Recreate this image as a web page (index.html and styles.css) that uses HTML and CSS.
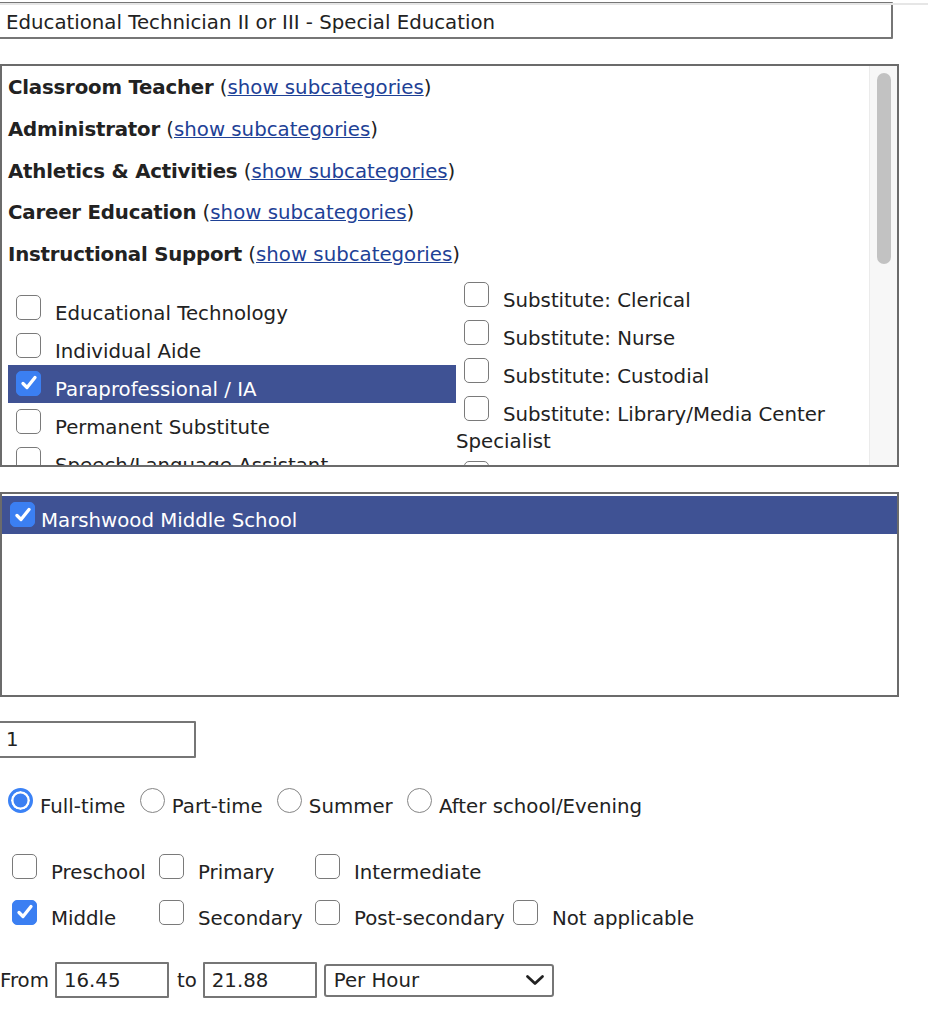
FILE: index.html
```html
<!DOCTYPE html>
<html>
<head>
<meta charset="utf-8">
<title>Job posting</title>
<link rel="stylesheet" href="styles.css">
</head>
<body>
<div class="topshade"></div>
<form class="form">
  <input class="field title" type="text" value="Educational Technician II or III - Special Education">

  <div class="cats">
    <div class="cats-body">
      <div class="cat"><b>Classroom Teacher</b> (<a href="#">show subcategories</a>)</div>
      <div class="cat"><b>Administrator</b> (<a href="#">show subcategories</a>)</div>
      <div class="cat"><b>Athletics &amp; Activities</b> (<a href="#">show subcategories</a>)</div>
      <div class="cat"><b>Career Education</b> (<a href="#">show subcategories</a>)</div>
      <div class="cat"><b>Instructional Support</b> (<a href="#">show subcategories</a>)</div>
      <div class="subcats">
        <div class="subcol left">
          <label class="opt"><span class="cb"></span>Educational Technology</label>
          <label class="opt"><span class="cb"></span>Individual Aide</label>
          <label class="opt sel"><span class="cb on"><svg viewBox="0 0 22 22" width="22" height="22"><path d="M5 11.5 L9 15.5 L17 5.5" fill="none" stroke="#fff" stroke-width="3.3" stroke-linecap="round" stroke-linejoin="round"/></svg></span>Paraprofessional / IA</label>
          <label class="opt"><span class="cb"></span>Permanent Substitute</label>
          <label class="opt"><span class="cb"></span>Speech/Language Assistant</label>
        </div>
        <div class="subcol right">
          <label class="opt"><span class="cb"></span>Substitute: Clerical</label>
          <label class="opt"><span class="cb"></span>Substitute: Nurse</label>
          <label class="opt"><span class="cb"></span>Substitute: Custodial</label>
          <label class="opt"><span class="cb"></span>Substitute: Library/Media Center Specialist</label>
          <label class="opt"><span class="cb"></span>Substitute: Teacher</label>
        </div>
      </div>
    </div>
    <div class="scroll"><div class="thumb"></div></div>
  </div>

  <div class="schools">
    <label class="school"><span class="cb on"><svg viewBox="0 0 22 22" width="22" height="22"><path d="M5 11.5 L9 15.5 L17 5.5" fill="none" stroke="#fff" stroke-width="3.3" stroke-linecap="round" stroke-linejoin="round"/></svg></span>Marshwood Middle School</label>
  </div>

  <input class="field num" type="text" value="1">

  <div class="radios">
    <label class="radio"><span class="rb on"></span>Full-time</label>
    <label class="radio"><span class="rb"></span>Part-time</label>
    <label class="radio"><span class="rb"></span>Summer</label>
    <label class="radio"><span class="rb"></span>After school/Evening</label>
  </div>

  <div class="levels">
    <label class="lvl"><span class="cb"></span>Preschool</label>
    <label class="lvl"><span class="cb"></span>Primary</label>
    <label class="lvl"><span class="cb"></span>Intermediate</label>
    <span class="lvl"></span>
    <label class="lvl"><span class="cb on"><svg viewBox="0 0 22 22" width="22" height="22"><path d="M5 11.5 L9 15.5 L17 5.5" fill="none" stroke="#fff" stroke-width="3.3" stroke-linecap="round" stroke-linejoin="round"/></svg></span>Middle</label>
    <label class="lvl"><span class="cb"></span>Secondary</label>
    <label class="lvl"><span class="cb"></span>Post-secondary</label>
    <label class="lvl"><span class="cb"></span>Not applicable</label>
  </div>

  <div class="pay">
    <span class="from">From</span>
    <input class="field money" type="text" value="16.45">
    <span class="to">to</span>
    <input class="field money" type="text" value="21.88">
    <div class="select">
      <span>Per Hour</span>
      <svg class="chev" viewBox="0 0 20 12" width="20" height="12"><path d="M2.5 2.5 L10 9.5 L17.5 2.5" fill="none" stroke="#222" stroke-width="2.8" stroke-linecap="round" stroke-linejoin="round"/></svg>
    </div>
  </div>
</form>
</body>
</html>
```

FILE: styles.css
```css
* { box-sizing: border-box; }
html, body { margin: 0; padding: 0; background: #fff; }
body {
  font-family: "DejaVu Sans", Verdana, sans-serif;
  font-size: 19.75px;
  color: #222;
  overflow: hidden;
}
.topshade {
  position: absolute;
  left: 0; right: 0; top: 3px;
  height: 2px;
  background: #e6e6e6;
}
.form {
  display: flex;
  flex-direction: column;
  align-items: flex-start;
}
.field {
  font: inherit;
  color: #222;
  border: 2px solid #767676;
  border-radius: 1px;
  background: #fff;
  padding: 0 6px;
  height: 37px;
  outline: none;
}
.title {
  width: 895px;
  margin: 2px 0 0 -2px;
  padding-top: 3px;
}

/* categories list */
.cats {
  margin-top: 25px;
  width: 899px;
  height: 403px;
  border: 2px solid #6b6b6b;
  display: flex;
  overflow: hidden;
}
.cats-body {
  flex: 1;
  padding: 1px 0 0 6px;
  overflow: hidden;
}
.cat {
  line-height: 41.75px;
  white-space: nowrap;
}
.cat b { letter-spacing: -0.2px; }
.cat a { color: #1e4196; }
.subcats {
  display: flex;
  align-items: flex-start;
}
.subcol { line-height: 27px; }
.subcol.left { width: 448px; padding-top: 13px; }
.subcol.right { flex: 1; }
.opt { display: block; }
.sel { background: #3f5294; color: #fff; }

.scroll {
  width: 28px;
  background: #f7f7f7;
  border-left: 1px solid #ebebeb;
  padding: 7px 0 0 7px;
}
.thumb {
  width: 14px;
  height: 191px;
  border-radius: 7px;
  background: #c2c2c2;
}

/* custom checkbox */
.cb {
  display: inline-block;
  width: 25px;
  height: 25px;
  border: 1.5px solid #7a7a7a;
  border-radius: 5px;
  margin: 6px 14px 0 8px;
  vertical-align: baseline;
  background: #fff;
  overflow: hidden;
}
.cb svg { display: block; margin: 0.5px 0 0 0.5px; }
.cb.on { background: #3b7ff2; border-color: #3b7ff2; }

/* schools */
.schools {
  margin-top: 25px;
  width: 899px;
  height: 205px;
  border: 2px solid #6b6b6b;
  padding-top: 2px;
}
.school {
  display: block;
  background: #3f5294;
  color: #fff;
  line-height: 27px;
}
.school .cb { margin-right: 6px; }

.num {
  width: 198px;
  margin: 24px 0 0 -2px;
}

/* radios */
.radios {
  margin-top: 24px;
  line-height: 27px;
  white-space: nowrap;
}
.rb {
  display: inline-block;
  width: 25px;
  height: 25px;
  border-radius: 50%;
  border: 1.5px solid #858585;
  margin: 6px 7px 0 8px;
  vertical-align: baseline;
  overflow: hidden;
  background: #fff;
}
.rb.on {
  border: 3px solid #3b82f6;
  background: #3b7ff2;
  box-shadow: inset 0 0 0 2.5px #fff;
}

/* levels */
.levels {
  display: grid;
  grid-template-columns: 147px 156px 198px auto;
  row-gap: 7.5px;
  margin: 28px 0 0 4px;
  line-height: 27px;
  white-space: nowrap;
}

/* pay */
.pay {
  display: flex;
  align-items: center;
  margin-top: 30.5px;
  white-space: nowrap;
}
.money {
  width: 114px;
  height: 36px;
  padding: 0 7px;
}
.from { margin-right: 6px; }
.to { margin: 0 6px 0 8px; }
.select {
  margin-left: 7px;
  width: 230px;
  height: 33px;
  border: 2px solid #767676;
  border-radius: 3px;
  display: flex;
  align-items: center;
  justify-content: space-between;
  padding: 0 7px 0 8px;
}
.chev { display: block; }
```
